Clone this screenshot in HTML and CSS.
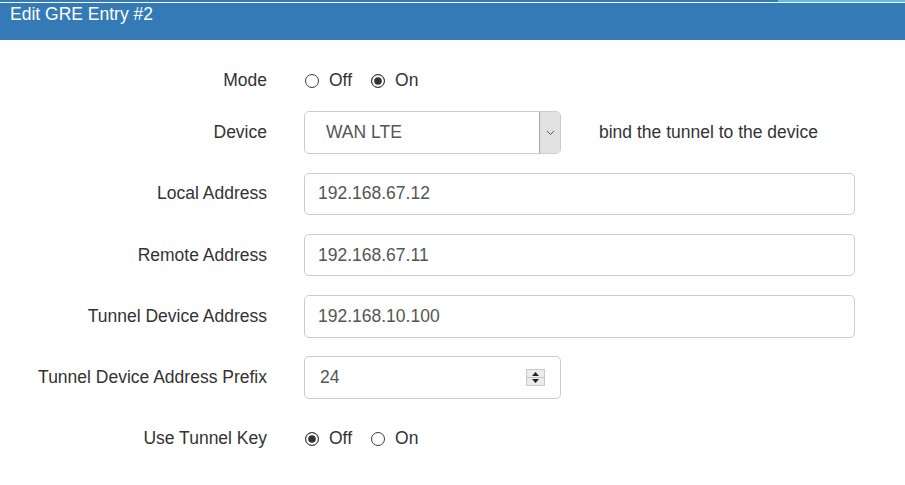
FILE: index.html
```html
<!DOCTYPE html>
<html>
<head>
<meta charset="utf-8">
<link rel="stylesheet" href="styles.css">
</head>
<body>
<div class="header">
  <div class="topclip"><span class="loc">Location: #1 RC 00.000</span><span class="tabs"></span></div>
  <span class="title">Edit GRE Entry #2</span>
</div>
<div class="form">
  <div class="row row-radio">
    <div class="label">Mode</div>
    <div class="radios">
      <span class="radio"></span><span class="rtext">Off</span>
      <span class="radio checked"></span><span class="rtext">On</span>
    </div>
  </div>
  <div class="row">
    <div class="label">Device</div>
    <div class="field-line">
      <div class="control select">
        <span class="value sel-value">WAN LTE</span>
        <span class="arrow"><svg width="9" height="6" viewBox="0 0 9 6"><polyline points="1,1 4.5,4.5 8,1" fill="none" stroke="#555" stroke-width="1"/></svg></span>
      </div>
      <span class="help">bind the tunnel to the device</span>
    </div>
  </div>
  <div class="row">
    <div class="label">Local Address</div>
    <div class="control text"><span class="value">192.168.67.12</span></div>
  </div>
  <div class="row">
    <div class="label">Remote Address</div>
    <div class="control text"><span class="value">192.168.67.11</span></div>
  </div>
  <div class="row">
    <div class="label">Tunnel Device Address</div>
    <div class="control text"><span class="value">192.168.10.100</span></div>
  </div>
  <div class="row">
    <div class="label">Tunnel Device Address Prefix</div>
    <div class="control number">
      <span class="value num-value">24</span>
      <svg class="spin" width="19" height="17" viewBox="0 0 19 17">
        <rect x="0.5" y="0.5" width="18" height="16" fill="#ebebeb" stroke="#c9c9c9"/>
        <line x1="1" y1="8.5" x2="18" y2="8.5" stroke="#c4c4c4"/>
        <polygon points="9.5,3 13,7 6,7" fill="#222"/>
        <polygon points="6,10 13,10 9.5,14" fill="#222"/>
      </svg>
    </div>
  </div>
  <div class="row">
    <div class="label">Use Tunnel Key</div>
    <div class="radios">
      <span class="radio checked"></span><span class="rtext">Off</span>
      <span class="radio"></span><span class="rtext">On</span>
    </div>
  </div>
</div>
</body>
</html>
```
FILE: styles.css
```css
* { box-sizing: border-box; }
html, body { margin: 0; padding: 0; }
body {
  font-family: "Liberation Sans", Arial, sans-serif;
  font-size: 17.5px;
  color: #333;
  background: #fff;
  width: 905px;
  height: 485px;
  overflow: hidden;
}
.header {
  position: relative;
  height: 40px;
  background: #337ab7;
  color: #fff;
  padding: 4px 0 0 10px;
  line-height: 20px;
}
.header::before {
  content: "";
  position: absolute;
  left: 0;
  right: 0;
  top: 2px;
  height: 1px;
  background: #fff;
}
.topclip {
  position: absolute;
  left: 0;
  right: 0;
  top: 0;
  height: 2px;
  overflow: hidden;
}
.loc {
  position: absolute;
  left: 590px;
  top: -17px;
  color: #fff;
  font-size: 17.5px;
  letter-spacing: 1px;
  line-height: 20px;
}
.tabs {
  position: absolute;
  left: 778px;
  right: 0;
  top: 0;
  height: 2px;
  background: #5bc0de;
}
.form {
  display: flex;
  flex-direction: column;
  gap: 18.75px;
  padding-top: 28.5px;
}
.row {
  display: grid;
  grid-template-columns: 267px 551px;
  column-gap: 37px;
  align-items: center;
  min-height: 42.5px;
}
.row.row-radio { min-height: 24px; }
.label {
  text-align: right;
  white-space: nowrap;
}
.radios {
  display: flex;
  align-items: center;
  padding-left: 1px;
}
.radio {
  width: 14px;
  height: 14px;
  border: 1px solid #3a3a3a;
  border-radius: 50%;
  background: #fff;
}
.radio.checked {
  background: #333;
  box-shadow: inset 0 0 0 2.2px #fff;
}
.rtext { margin-left: 10px; margin-right: 19px; }
.control {
  height: 42.5px;
  border: 1px solid #ccc;
  border-radius: 5px;
  color: #555;
  display: flex;
  align-items: center;
  background: #fff;
}
.control .value { flex: 1; white-space: nowrap; }
.text .value { padding-left: 13px; }
.field-line { display: flex; align-items: center; }
.select {
  width: 257px;
  overflow: hidden;
}
.sel-value { padding-left: 21px; }
.arrow {
  width: 21px;
  align-self: stretch;
  background: #e1e1e1;
  border-left: 1px solid #a6a6a6;
  display: flex;
  align-items: center;
  justify-content: center;
}
.help { margin-left: 38px; color: #333; }
.number { width: 257px; padding-right: 15px; }
.num-value { padding-left: 15px; }
.spin { display: block; }
```
